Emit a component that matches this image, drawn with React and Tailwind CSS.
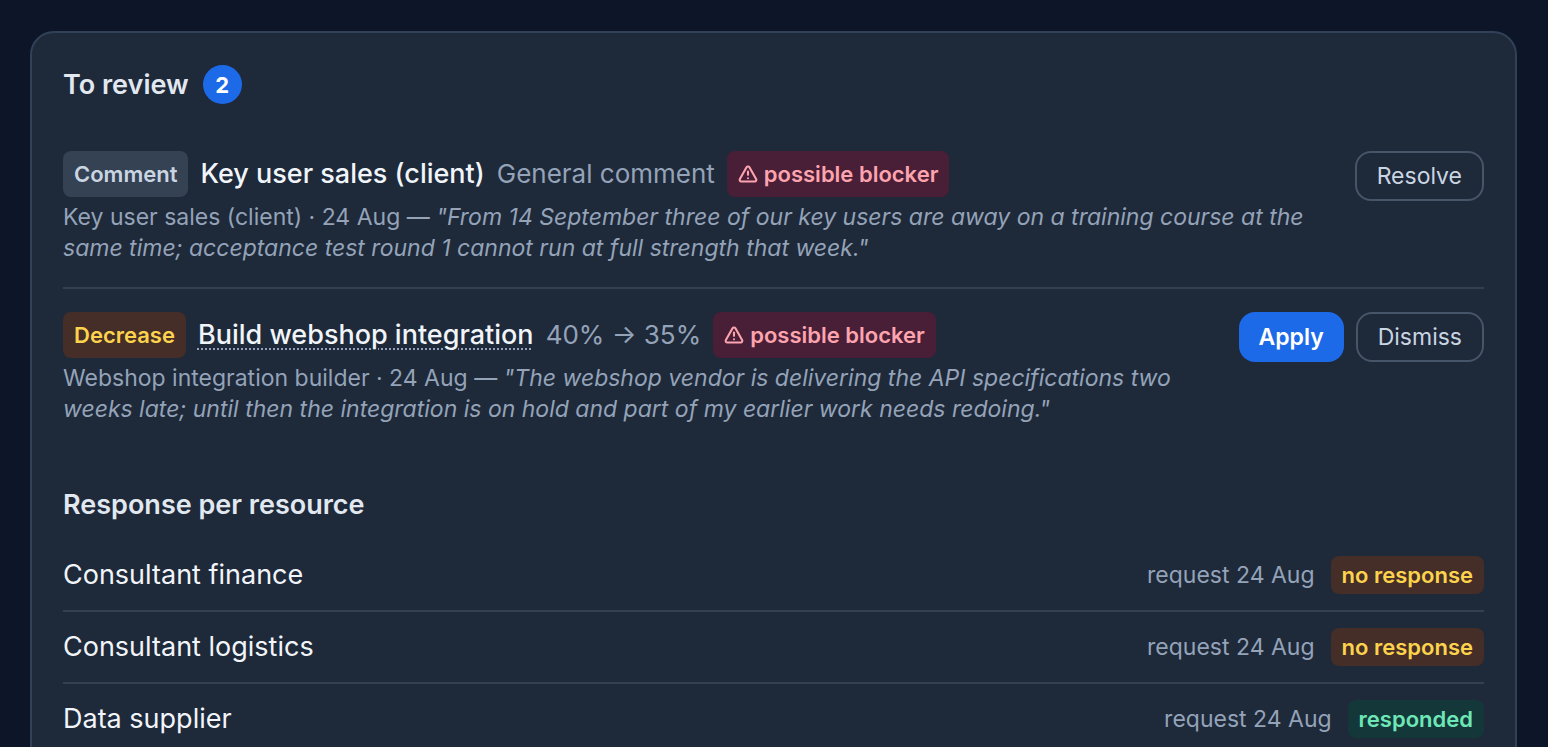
import { TriangleAlert } from 'lucide-react';

const reviewItems = [
  {
    id: 1,
    type: 'Comment',
    typeClass: 'bg-[#354254] text-slate-300',
    title: 'Key user sales (client)',
    detail: 'General comment',
    author: 'Key user sales (client)',
    date: '24 Aug',
    quote: 'From 14 September three of our key users are away on a training course at the same time; acceptance test round 1 cannot run at full strength that week.',
    blocker: true,
    linked: false,
    actions: ['Resolve'],
  },
  {
    id: 2,
    type: 'Decrease',
    typeClass: 'bg-[#452d28] text-[#fcd34d]',
    title: 'Build webshop integration',
    detail: '40% → 35%',
    author: 'Webshop integration builder',
    date: '24 Aug',
    quote: 'The webshop vendor is delivering the API specifications two weeks late; until then the integration is on hold and part of my earlier work needs redoing.',
    blocker: true,
    linked: true,
    actions: ['Apply', 'Dismiss'],
  },
];

const resources = [
  { id: 1, name: 'Consultant finance', request: '24 Aug', responded: false },
  { id: 2, name: 'Consultant logistics', request: '24 Aug', responded: false },
  { id: 3, name: 'Data supplier', request: '24 Aug', responded: true },
];

const ActionButton = ({ label }) => (
  <button
    type="button"
    className={
      label === 'Apply'
        ? 'h-[50px] rounded-2xl bg-[#1d6ae8] px-5 text-[23px] font-semibold text-white'
        : 'h-[50px] rounded-2xl border-2 border-[#475569] px-5 text-[23px] text-slate-300'
    }
  >
    {label}
  </button>
);

const ReviewItem = ({ item }) => (
  <li className="flex items-start justify-between gap-12 py-[23px]">
    <div className="min-w-0 flex-1">
      <div className="flex flex-wrap gap-3 text-[27px] leading-[46px]">
        <span className={`rounded-lg px-[11px] text-[22px] font-semibold ${item.typeClass}`}>{item.type}</span>
        {item.linked ? (
          <a
            href="#task"
            className="font-medium text-slate-100 underline decoration-slate-400 decoration-dotted decoration-2 underline-offset-4"
          >
            {item.title}
          </a>
        ) : (
          <span className="font-medium text-slate-100">{item.title}</span>
        )}
        <span className="text-[26px] text-[#94a3b8]">{item.detail}</span>
        {item.blocker && (
          <span className="flex items-center gap-1.5 rounded-lg bg-[#491e37] px-[11px] text-[22px] font-semibold text-[#fda4af]">
            <TriangleAlert size={20} strokeWidth={2.5} />
            possible blocker
          </span>
        )}
      </div>
      <p className="mt-[5px] text-[23px] leading-[31px] text-[#94a3b8]">
        {`${item.author} · ${item.date} — `}
        <em>{`"${item.quote}"`}</em>
      </p>
    </div>
    <div className="flex shrink-0 gap-3">
      {item.actions.map(action => (
        <ActionButton key={action} label={action} />
      ))}
    </div>
  </li>
);

const ResourceRow = ({ resource }) => (
  <li className="flex items-center justify-between py-4">
    <span className="text-[27px] leading-[38px] text-slate-100">{resource.name}</span>
    <div className="flex items-center gap-4 leading-[38px]">
      <span className="text-[23px] text-[#94a3b8]">{`request ${resource.request}`}</span>
      <span
        className={
          resource.responded
            ? 'rounded-lg bg-[#14383a] px-[11px] text-[22px] font-semibold text-[#6ee7b7]'
            : 'rounded-lg bg-[#452d28] px-[11px] text-[22px] font-semibold text-[#fcd34d]'
        }
      >
        {resource.responded ? 'responded' : 'no response'}
      </span>
    </div>
  </li>
);

const App = () => {
  return (
    <div className="h-screen overflow-hidden bg-[#0d1628] pt-[31px] pr-[31px] pl-[30px] font-['Inter',sans-serif]">
      <main className="rounded-3xl border-2 border-slate-700 bg-[#1e293a] px-[31px] pt-8 pb-8">
        <h2 className="flex items-center gap-3.5 text-[27px] leading-[38px] font-semibold text-slate-200">
          To review
          <span className="flex size-[39px] items-center justify-center rounded-full bg-[#1d6ae8] text-[22px] font-bold text-white">
            {reviewItems.length}
          </span>
        </h2>
        <ul className="mt-6 divide-y-2 divide-[#334052]">
          {reviewItems.map(item => (
            <ReviewItem key={item.id} item={item} />
          ))}
        </ul>

        <h2 className="mt-[38px] text-[27px] leading-[38px] font-semibold text-slate-200">Response per resource</h2>
        <ul className="mt-4 divide-y-2 divide-[#334052]">
          {resources.map(resource => (
            <ResourceRow key={resource.id} resource={resource} />
          ))}
        </ul>
      </main>
    </div>
  );
};

export default App;
